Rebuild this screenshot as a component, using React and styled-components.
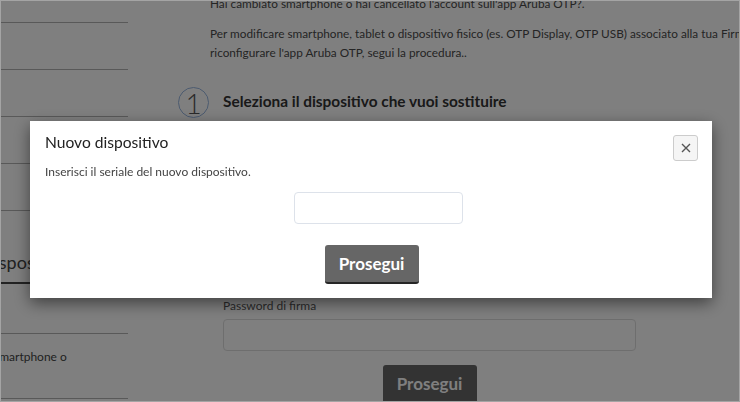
import React from "react";
import styled, { createGlobalStyle } from "styled-components";

const Global = createGlobalStyle`
  html, body { margin: 0; padding: 0; background: #fff; overflow: hidden; }
  body { font-family: Lato, "Open Sans", Arial, sans-serif; }
  * { box-sizing: border-box; }
`;

const Page = styled.div`
  display: flex;
  margin-top: -24px;
  min-height: 430px;
`;

const Sidebar = styled.nav`
  width: 128px;
  flex-shrink: 0;
  overflow: hidden;
`;

const SideItem = styled.div`
  height: ${(p) => p.$h}px;
  padding-top: ${(p) => p.$pt || 0}px;
  border-bottom: 1px solid #b2b2b2;
  font-size: 12px;
  line-height: 18px;
  color: #444;
  white-space: nowrap;
`;

const SideHeading = styled.div`
  height: 73px;
  display: flex;
  align-items: flex-end;
  padding-bottom: 8px;
  border-bottom: 2px solid #444;
  font-size: 18px;
  line-height: 24px;
  color: #444;
  white-space: nowrap;
`;

const SideLabel = styled.span`
  display: inline-block;
  margin-left: ${(p) => p.$shift}px;
`;

const Main = styled.main`
  flex: 1;
  margin-left: 50px;
  padding-top: 18px;
  color: #4a4a4a;
  font-size: 11.8px;
  line-height: 19px;
  white-space: nowrap;
`;

const Para = styled.p`
  margin: 0 0 11px 32px;
`;

const StepRow = styled.div`
  display: flex;
  align-items: center;
  gap: 14px;
  margin-top: 25px;
`;

const StepNum = styled.div`
  width: 31px;
  height: 31px;
  border-radius: 50%;
  border: 1.5px solid #98b6e0;
  display: flex;
  align-items: center;
  justify-content: center;
  font-size: 28px;
  font-weight: 300;
  color: #555;
  line-height: 1;
`;

const StepTitle = styled.h2`
  margin: -3px 0 0;
  font-size: 15.4px;
  font-weight: 700;
  color: #333;
  line-height: 22px;
`;

const StepBody = styled.div`
  margin: 179px 0 0 45px;
  width: 413px;
  display: flex;
  flex-direction: column;
`;

const FieldLabel = styled.label`
  font-size: 12px;
  line-height: 17px;
  color: #555;
  margin-bottom: 5px;
`;

const TextInput = styled.input`
  width: ${(p) => p.$w}px;
  height: 32px;
  border: 1px solid ${(p) => p.$border || "#ddd"};
  border-radius: 4px;
  background: #fff;
  outline: none;
  font: inherit;
`;

const Button = styled.button`
  width: 94px;
  height: 39px;
  border: none;
  border-bottom: 2px solid #262626;
  border-radius: 3px;
  background: #666;
  color: #fff;
  font-family: Lato, "Open Sans", Arial, sans-serif;
  font-size: 17px;
  font-weight: 700;
  padding: 0;
  cursor: pointer;
  align-self: center;
  margin-top: ${(p) => p.$mt}px;
`;

const Overlay = styled.div`
  position: fixed;
  inset: 0;
  background: rgba(0, 0, 0, 0.5);
  display: flex;
  justify-content: center;
  align-items: flex-start;
  padding: 121px 0 0 2px;
`;

const Modal = styled.div`
  width: 682px;
  height: 177px;
  background: #fff;
  box-shadow: 0 5px 15px rgba(0, 0, 0, 0.5);
  padding: 10px 14px 14px 15px;
  display: flex;
  flex-direction: column;
`;

const ModalHeader = styled.div`
  display: flex;
  justify-content: space-between;
  align-items: flex-start;
`;

const ModalTitle = styled.h3`
  margin: 0;
  font-size: 15.6px;
  font-weight: 400;
  line-height: 22px;
  color: #222;
`;

const CloseButton = styled.button`
  width: 25px;
  height: 26px;
  margin-top: 4px;
  border: 1px solid #ccc;
  border-radius: 3px;
  background: #f5f5f5;
  display: flex;
  align-items: center;
  justify-content: center;
  padding: 0;
`;

const ModalText = styled.p`
  margin: 2px 0 0;
  font-size: 12px;
  line-height: 17px;
  color: #444;
`;

const ModalForm = styled.div`
  display: flex;
  flex-direction: column;
  align-items: center;
  margin-top: 12px;
`;

const SerialInput = styled(TextInput)`
  margin-left: 14px;
`;

const Frame = styled.div`
  position: fixed;
  inset: 0;
  border: 1px solid #a4a4a4;
  pointer-events: none;
`;

export default function App() {
  return (
    <>
      <Global />
      <Page>
        <Sidebar>
          <SideItem $h={47}>&nbsp;</SideItem>
          <SideItem $h={47}>&nbsp;</SideItem>
          <SideItem $h={47}>&nbsp;</SideItem>
          <SideItem $h={47}>&nbsp;</SideItem>
          <SideItem $h={47}>&nbsp;</SideItem>
          <SideHeading>
            <SideLabel $shift={-19}>Dispositivi</SideLabel>
          </SideHeading>
          <SideItem $h={50} $pt={15}>
            <SideLabel $shift={-34}>Elenco</SideLabel>
          </SideItem>
          <SideItem $h={65} $pt={14}>
            <SideLabel $shift={-6}>smartphone o</SideLabel>
          </SideItem>
        </Sidebar>
        <Main>
          <Para>Hai cambiato smartphone o hai cancellato l'account sull'app Aruba OTP?.</Para>
          <Para>
            Per modificare smartphone, tablet o dispositivo fisico (es. OTP Display, OTP USB) associato alla tua Firma Remota o
            <br />
            riconfigurare l'app Aruba OTP, segui la procedura..
          </Para>
          <StepRow>
            <StepNum>1</StepNum>
            <StepTitle>Seleziona il dispositivo che vuoi sostituire</StepTitle>
          </StepRow>
          <StepBody>
            <FieldLabel>Password di firma</FieldLabel>
            <TextInput $w={413} type="password" />
            <Button $mt={14}>Prosegui</Button>
          </StepBody>
        </Main>
      </Page>
      <Overlay>
        <Modal>
          <ModalHeader>
            <ModalTitle>Nuovo dispositivo</ModalTitle>
            <CloseButton aria-label="Chiudi">
              <svg width="10" height="10" viewBox="0 0 10 10">
                <path d="M1 1L9 9M9 1L1 9" stroke="#555" strokeWidth="1.4" />
              </svg>
            </CloseButton>
          </ModalHeader>
          <ModalText>Inserisci il seriale del nuovo dispositivo.</ModalText>
          <ModalForm>
            <SerialInput $w={169} $border="#dde2ea" />
            <Button $mt={21}>Prosegui</Button>
          </ModalForm>
        </Modal>
      </Overlay>
      <Frame />
    </>
  );
}
